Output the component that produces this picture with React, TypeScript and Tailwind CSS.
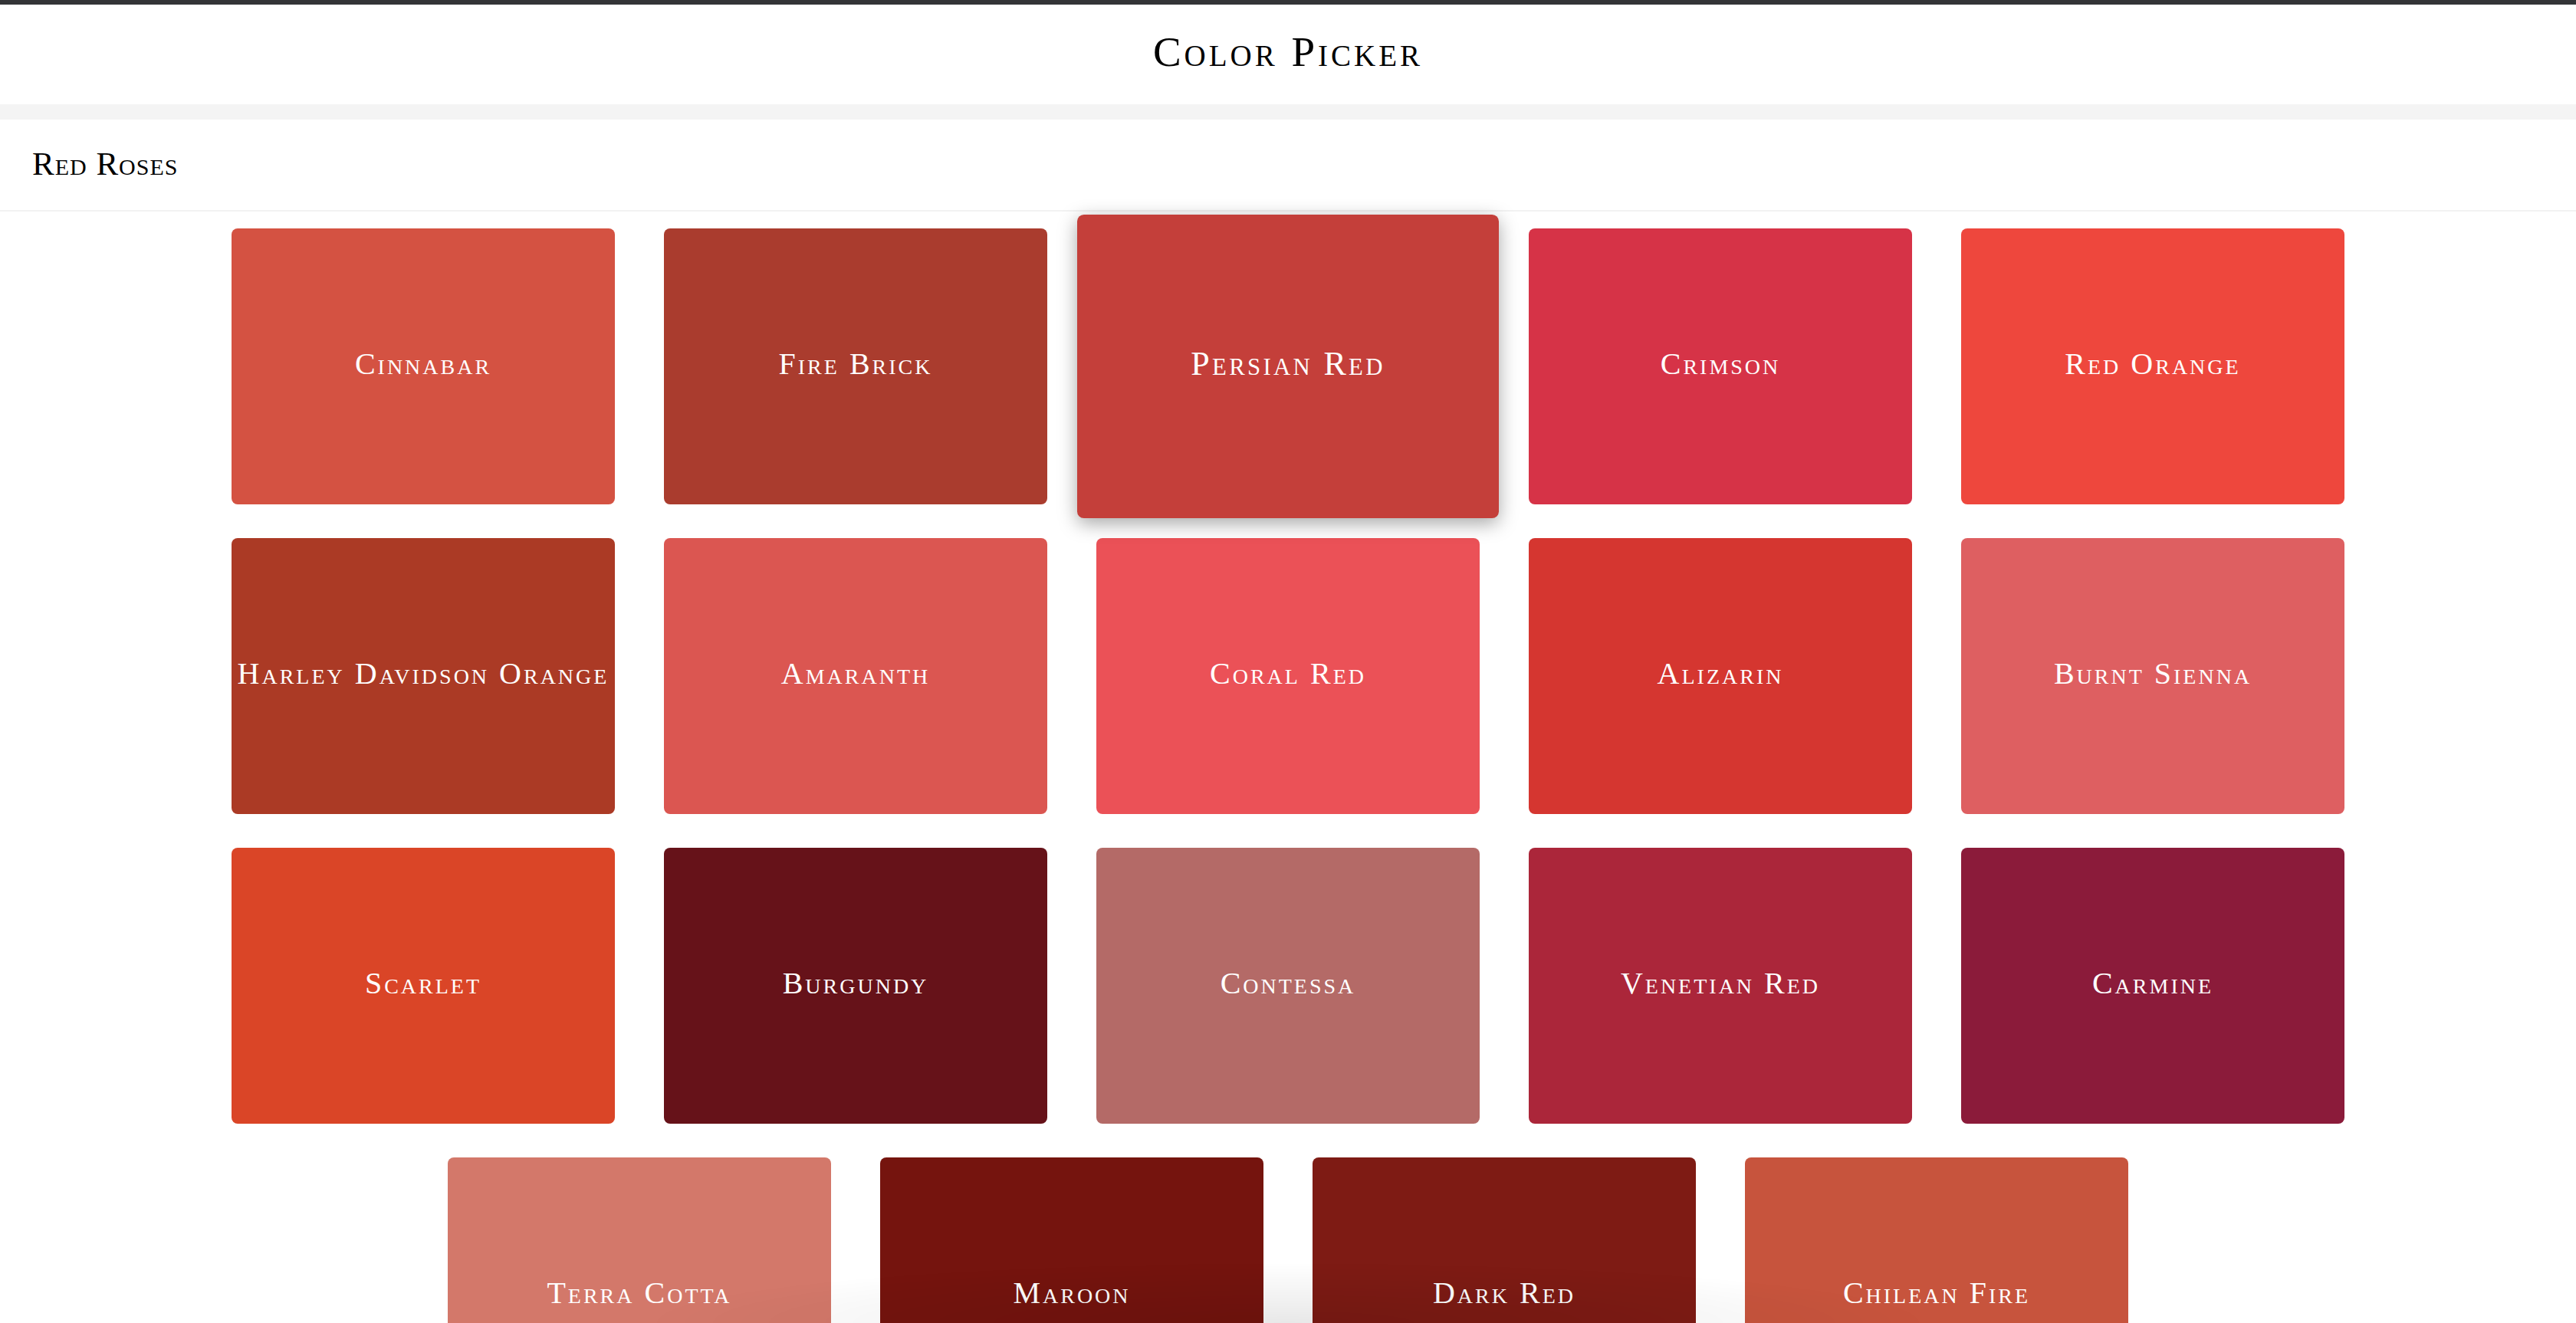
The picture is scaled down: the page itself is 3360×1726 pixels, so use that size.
import * as React from "react";

interface Swatch {
  name: string;
  hex: string;
}

// the red roses palette, in the order it is laid out
const swatches: Swatch[] = [
  { name: "Cinnabar", hex: "#d45242" },
  { name: "Fire Brick", hex: "#aa3c2e" },
  { name: "Persian Red", hex: "#c43f3a" },
  { name: "Crimson", hex: "#d63347" },
  { name: "Red Orange", hex: "#ee473d" },
  { name: "Harley Davidson Orange", hex: "#ab3a25" },
  { name: "Amaranth", hex: "#db5651" },
  { name: "Coral Red", hex: "#eb5157" },
  { name: "Alizarin", hex: "#d53630" },
  { name: "Burnt Sienna", hex: "#de5f61" },
  { name: "Scarlet", hex: "#da4527" },
  { name: "Burgundy", hex: "#661219" },
  { name: "Contessa", hex: "#b46a67" },
  { name: "Venetian Red", hex: "#ab263a" },
  { name: "Carmine", hex: "#8b1b3a" },
  { name: "Terra Cotta", hex: "#d3786a" },
  { name: "Maroon", hex: "#75140e" },
  { name: "Dark Red", hex: "#7e1b14" },
  { name: "Chilean Fire", hex: "#c7543d" },
];

const serif = "font-['Liberation_Serif','Times_New_Roman',serif] [font-variant:small-caps]";

function ColorCard({ name, hex, active }: { name: string; hex: string; active?: boolean }) {
  return (
    <div
      className={
        active
          ? "relative z-10 mx-[32px] my-[22px] flex h-[360px] w-[500px] scale-110 items-center justify-center rounded-lg pb-[6px] shadow-[0_6px_22px_rgba(0,0,0,0.35)]"
          : "mx-[32px] my-[22px] flex h-[360px] w-[500px] items-center justify-center rounded-lg pb-[6px]"
      }
      style={{ backgroundColor: hex }}
    >
      <span className={`${serif} whitespace-nowrap text-[40px] leading-none tracking-[3px] text-white`}>{name}</span>
    </div>
  );
}

export default function App() {
  return (
    <div className="min-h-screen bg-white">
      <div className="h-[6px] bg-[#333437]" />
      <header className="flex h-[130px] items-center justify-center pb-[8px]">
        <h1 className={`${serif} text-[55px] leading-none tracking-[4px] text-black`}>Color Picker</h1>
      </header>
      <div className="h-[20px] bg-[#f4f4f4]" />
      <div className="flex h-[120px] items-center border-b-2 border-[#f2f2f2] px-[42px] pb-[4px]">
        <h2 className={`${serif} text-[43px] leading-none tracking-[1px] text-black`}>Red Roses</h2>
      </div>
      <div className="flex flex-wrap justify-center">
        {swatches.map((s) => (
          <ColorCard key={s.name} name={s.name} hex={s.hex} active={s.name === "Persian Red"} />
        ))}
      </div>
      <div className="pointer-events-none fixed bottom-0 left-1/2 h-[80px] w-[1700px] -translate-x-1/2 bg-[radial-gradient(ellipse_at_bottom,rgba(0,0,0,0.09),transparent_70%)]" />
    </div>
  );
}
